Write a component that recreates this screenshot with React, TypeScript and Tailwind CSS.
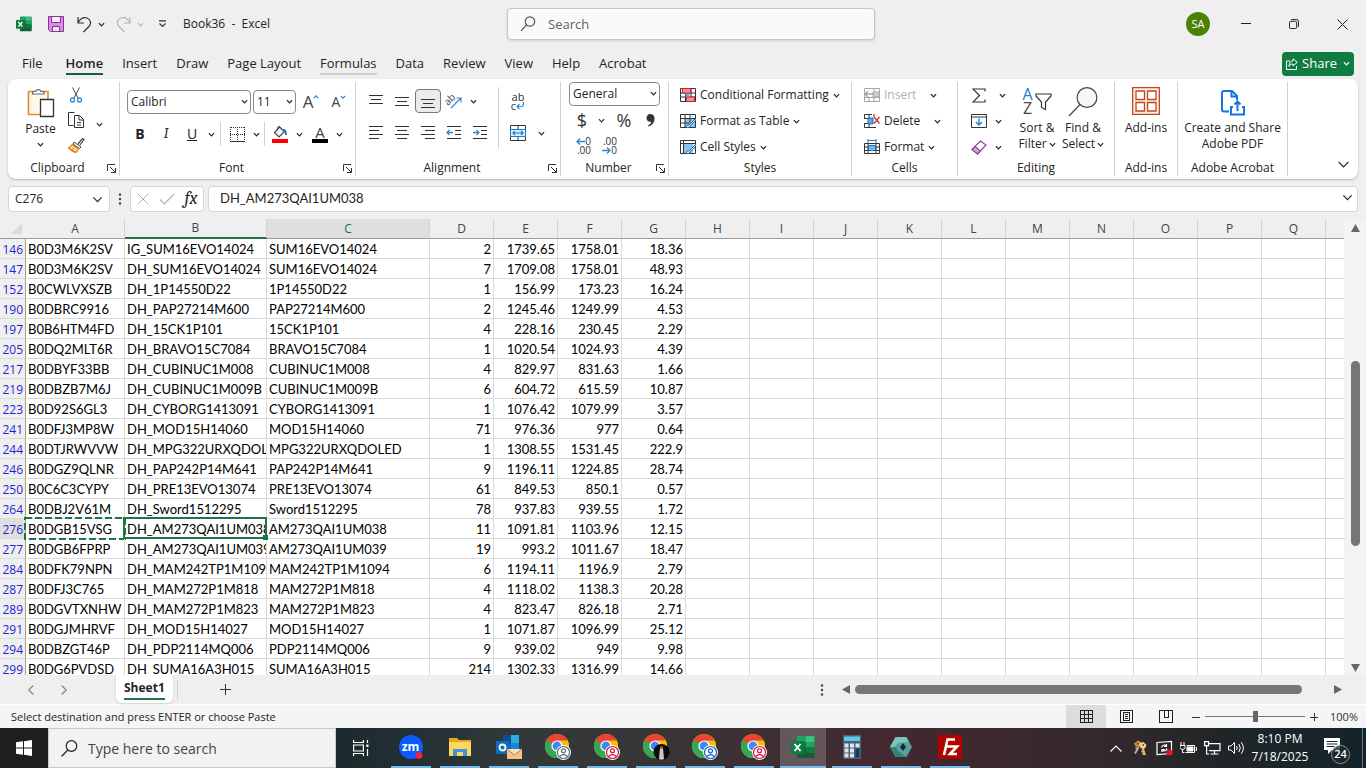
import { useState } from 'react';
import type { ReactNode } from 'react';
import clsx from 'clsx';

const TABS = ['File', 'Home', 'Insert', 'Draw', 'Page Layout', 'Formulas', 'Data', 'Review', 'View', 'Help', 'Acrobat'];

const COLUMNS = ['A', 'B', 'C', 'D', 'E', 'F', 'G', 'H', 'I', 'J', 'K', 'L', 'M', 'N', 'O', 'P', 'Q'];

const ROWS: [number, string, string, string, string, string, string, string][] = [
  [146, 'B0D3M6K2SV', 'IG_SUM16EVO14024', 'SUM16EVO14024', '2', '1739.65', '1758.01', '18.36'],
  [147, 'B0D3M6K2SV', 'DH_SUM16EVO14024', 'SUM16EVO14024', '7', '1709.08', '1758.01', '48.93'],
  [152, 'B0CWLVXSZB', 'DH_1P14550D22', '1P14550D22', '1', '156.99', '173.23', '16.24'],
  [190, 'B0DBRC9916', 'DH_PAP27214M600', 'PAP27214M600', '2', '1245.46', '1249.99', '4.53'],
  [197, 'B0B6HTM4FD', 'DH_15CK1P101', '15CK1P101', '4', '228.16', '230.45', '2.29'],
  [205, 'B0DQ2MLT6R', 'DH_BRAVO15C7084', 'BRAVO15C7084', '1', '1020.54', '1024.93', '4.39'],
  [217, 'B0DBYF33BB', 'DH_CUBINUC1M008', 'CUBINUC1M008', '4', '829.97', '831.63', '1.66'],
  [219, 'B0DBZB7M6J', 'DH_CUBINUC1M009B', 'CUBINUC1M009B', '6', '604.72', '615.59', '10.87'],
  [223, 'B0D92S6GL3', 'DH_CYBORG1413091', 'CYBORG1413091', '1', '1076.42', '1079.99', '3.57'],
  [241, 'B0DFJ3MP8W', 'DH_MOD15H14060', 'MOD15H14060', '71', '976.36', '977', '0.64'],
  [244, 'B0DTJRWVVW', 'DH_MPG322URXQDOLED', 'MPG322URXQDOLED', '1', '1308.55', '1531.45', '222.9'],
  [246, 'B0DGZ9QLNR', 'DH_PAP242P14M641', 'PAP242P14M641', '9', '1196.11', '1224.85', '28.74'],
  [250, 'B0C6C3CYPY', 'DH_PRE13EVO13074', 'PRE13EVO13074', '61', '849.53', '850.1', '0.57'],
  [264, 'B0DBJ2V61M', 'DH_Sword1512295', 'Sword1512295', '78', '937.83', '939.55', '1.72'],
  [276, 'B0DGB15VSG', 'DH_AM273QAI1UM038', 'AM273QAI1UM038', '11', '1091.81', '1103.96', '12.15'],
  [277, 'B0DGB6FPRP', 'DH_AM273QAI1UM039', 'AM273QAI1UM039', '19', '993.2', '1011.67', '18.47'],
  [284, 'B0DFK79NPN', 'DH_MAM242TP1M1094', 'MAM242TP1M1094', '6', '1194.11', '1196.9', '2.79'],
  [287, 'B0DFJ3C765', 'DH_MAM272P1M818', 'MAM272P1M818', '4', '1118.02', '1138.3', '20.28'],
  [289, 'B0DGVTXNHW', 'DH_MAM272P1M823', 'MAM272P1M823', '4', '823.47', '826.18', '2.71'],
  [291, 'B0DGJMHRVF', 'DH_MOD15H14027', 'MOD15H14027', '1', '1071.87', '1096.99', '25.12'],
  [294, 'B0DBZGT46P', 'DH_PDP2114MQ006', 'PDP2114MQ006', '9', '939.02', '949', '9.98'],
  [299, 'B0DG6PVDSD', 'DH_SUMA16A3H015', 'SUMA16A3H015', '214', '1302.33', '1316.99', '14.66'],
];

const Chevron = ({ size = 7, className }: { size?: number; className?: string }) => (
  <svg width={size} height={size} viewBox="0 0 8 8" fill="none" stroke="currentColor" strokeWidth="1.2" className={clsx('shrink-0', className)}>
    <path d="M1 2.4 4 5.5 7 2.4" vectorEffect="non-scaling-stroke" />
  </svg>
);

const Drop = ({ label, className }: { label: string; className?: string }) => (
  <button aria-label={label} className={clsx('flex h-6 w-3 items-center justify-center', className)}>
    <Chevron />
  </button>
);

const Tool = ({ label, children, className }: { label: string; children: ReactNode; className?: string }) => (
  <button aria-label={label} className={clsx('flex h-6 w-[26px] shrink-0 items-center justify-center', className)}>
    {children}
  </button>
);

const Divider = ({ className }: { className?: string }) => <span className={clsx('w-px bg-[#d1d1d1]', className)} />;

const Group = ({ name, launcher, className, inset, children }: { name: string; launcher?: boolean; className: string; inset?: string; children: ReactNode }) => (
  <section className={clsx('my-[3px] flex shrink-0 flex-col border-r border-[#d1d1d1]', className)}>
    <div className={clsx('h-[78px]', inset)}>{children}</div>
    <div className="flex h-4 items-center">
      <span className="flex-1 text-center whitespace-nowrap">{name}</span>
      {launcher && (
        <button aria-label={`${name} settings`} className="mr-[3px]">
          <svg width="9" height="9" viewBox="0 0 9 9" fill="none" stroke="#333">
            <path d="M.5 7V.5H8M3 3l5 5M8.5 4v4.5H4" />
          </svg>
        </button>
      )}
    </div>
  </section>
);

const Dropdown = ({ label, value, className }: { label: string; value: string; className: string }) => (
  <div className={clsx('relative', className)}>
    <select aria-label={label} className="h-6 w-full appearance-none rounded border border-[#8a8a8a] bg-white pl-[3px] text-xs">
      <option>{value}</option>
    </select>
    <Chevron className="pointer-events-none absolute top-2 right-[3px]" />
  </div>
);

const Lines = ({ rows }: { rows: [number, number, number][] }) => (
  <svg width="16" height="16" viewBox="0 0 16 16" stroke="#333" shapeRendering="crispEdges">
    {rows.map(([x1, x2, y]) => <path key={y} d={`M${x1} ${y}.5H${x2}`} />)}
  </svg>
);

type SheetKind = 'cond' | 'table' | 'cell' | 'insert' | 'delete' | 'format';

const SheetGlyph = ({ kind }: { kind: SheetKind }) => {
  const line = kind === 'insert' ? '#a6a6a6' : '#333';
  return (
    <svg width="16" height="16" viewBox="0 0 16 16" fill="none" stroke={line} className="shrink-0">
      {kind === 'cond' && (
        <>
          <path d="M.5 1.5h15v13H.5zM.5 6h15M.5 10h15M5.5 1v14M11 1v14" fill="#fff" />
          <path d="M2.5 1.5h8V6h-8zM6.5 10h8v4.5h-8z" fill="#ff8a8a" stroke="#c9252d" />
          <path d="M5.5 6.5h4v3h-4z" fill="#5ea5e0" stroke="none" />
        </>
      )}
      {kind === 'table' && (
        <>
          <path d="M5 5h10v10H5z" fill="#8cc3ef" stroke="none" />
          <path d="M.5 1.5h15v13H.5zM.5 5.5h15M.5 10h10M5 1v14M10 1v8" />
        </>
      )}
      {kind === 'cell' && (
        <>
          <path d="M4 5h9v9H4z" fill="#8cc3ef" stroke="none" />
          <path d="M.5 1.5h15v13H.5zM.5 4.5h15M3.5 1v14" />
        </>
      )}
      {(kind === 'table' || kind === 'cell') && (
        <path d="M15.5 5.5 9 12c-1.5-.5-2.5.5-3 2.5 2 .3 3.800 0 4.200-1.500L16 7z" fill="#d6ebfa" stroke="#1f6cb0" />
      )}
      {kind === 'insert' && (
        <>
          <path d="M.5 1.5h15v13H.5zM10 1v14M.5 10.5h15M5 10v5" />
          <path d="M9 5h6v5H9z" fill="#cfcfcf" />
          <path d="M10 7H1M4 4 1 7l3 3" strokeWidth="1.5" />
        </>
      )}
      {kind === 'delete' && (
        <>
          <path d="M8 1.500H.5V5M.5 10v4.500H12M5 1v4M5 10v4.500M10 1v3M0 5.500h4M0 10.500h4" />
          <path d="M4 5h5v6H4z" fill="#5ea9e6" stroke="#1f6cb0" />
          <path d="m10 4 5.500 6.500M15.500 4 10 10.500" stroke="#d13438" strokeWidth="1.3" />
        </>
      )}
      {kind === 'format' && (
        <>
          <path d="M4 0v4M12 0v4M4 1.500h8" stroke="#1f7cc9" />
          <path d="M.5 4.500h15v10H.5zM.5 8h15M.5 11.500h15M4 4v11M12 4v11" />
          <path d="M4.500 6.500h7v5h-7z" fill="#74b8f0" stroke="#1f6cb0" />
        </>
      )}
    </svg>
  );
};

const ListTool = ({ kind, text, disabled, wide }: { kind: SheetKind; text: string; disabled?: boolean; wide?: boolean }) => (
  <button className="flex h-[26px] items-center gap-1 whitespace-nowrap">
    <SheetGlyph kind={kind} />
    <span className={clsx(disabled && 'text-[#b0b0b0]')}>{text}</span>
    <Chevron className={clsx(wide && 'ml-2.5')} />
  </button>
);

const ExcelLogo = ({ size }: { size: number }) => (
  <svg width={size} height={size} viewBox="0 0 24 24">
    <path d="M7 1h15.500q1 0 1 1v20q0 1-1 1H7q-1 0-1-1V2q0-1 1-1" fill="#185c37" />
    <path d="M6 1h9v6H6zM15 7h8.500v5.500H15z" fill="#21a366" />
    <path d="M15 1h7.500q1 0 1 1v5H15z" fill="#33c481" />
    <path d="M6 7h9v5.500H6z" fill="#107c41" />
    <path d="M15 12.500h8.500V18H15z" fill="#107c41" />
    <rect y="6" width="13" height="13" rx="1" fill="#107c41" />
    <path d="m3.500 9 6 7M9.500 9l-6 7" stroke="#fff" strokeWidth="1.900" />
  </svg>
);

const TitleBar = () => (
  <header className="grid h-12 grid-cols-[507px_minmax(0,368px)_1fr] items-center">
    <div className="flex items-center pl-4">
      <ExcelLogo size={16} />
      <button aria-label="Save" className="ml-4">
        <svg width="16" height="16" viewBox="0 0 16 16" fill="#d98fe0" stroke="#8b2f97">
          <path d="M.5.5h15v15H2.500l-2-2z" />
          <path d="M3.500.5h9v6h-9zM4.500 10.500h7v5h-7z" fill="#f7ecf8" />
        </svg>
      </button>
      <button aria-label="Undo" className="ml-3">
        <svg width="17" height="17" viewBox="0 0 17 17" fill="none" stroke="#333" strokeWidth="1.200">
          <path d="M2 1v6h6M2 7c2.500-5 6-6 9-5 4 1.500 4.500 6 2 8.500L7.500 16" />
        </svg>
      </button>
      <Drop label="Undo history" className="ml-0.5" />
      <button aria-label="Redo" className="ml-2 text-[#b5b5b5]">
        <svg width="17" height="17" viewBox="0 0 17 17" fill="none" stroke="currentColor" strokeWidth="1.200">
          <path d="M15 1v6H9M15 7c-2.500-5-6-6-9-5-4 1.500-4.500 6-2 8.500L9.500 16" />
        </svg>
      </button>
      <Drop label="Redo history" className="ml-0.5 text-[#b5b5b5]" />
      <button aria-label="Customize toolbar" className="ml-3">
        <svg width="9" height="8" viewBox="0 0 9 8" fill="none" stroke="#333" strokeWidth="1.200">
          <path d="M1 .9h7M1.500 3.500l3 3 3-3" />
        </svg>
      </button>
      <span className="ml-4 text-xs whitespace-pre">Book36  -  Excel</span>
    </div>
    <label className="flex h-8 items-center gap-3 rounded border border-[#c4c4c4] bg-[#fafafa] pl-3 shadow-sm">
      <svg width="16" height="16" viewBox="0 0 16 16" fill="none" stroke="#555" strokeWidth="1.200">
        <circle cx="10" cy="5.500" r="4.700" />
        <path d="M6.500 9 1 14.800" />
      </svg>
      <input aria-label="Search" placeholder="Search" className="min-w-0 flex-1 bg-transparent pt-0.5 text-[13px] outline-none placeholder:text-[#616161]" />
    </label>
    <div className="flex h-full items-center justify-end">
      <button className="mr-3 flex size-6 items-center justify-center rounded-full bg-[#498205] text-[11px] text-white">SA</button>
      <button aria-label="Minimize" className="flex w-12 justify-center">
        <svg width="10" height="10" viewBox="0 0 10 10" stroke="#222"><path d="M0 4.500h10" /></svg>
      </button>
      <button aria-label="Restore" className="flex w-12 justify-center">
        <svg width="10" height="10" viewBox="0 0 11 11" fill="none" stroke="#222" strokeWidth="1.100">
          <rect x=".5" y="2.500" width="8" height="8" rx="1.500" />
          <path d="M2.500.5H8q2.500 0 2.500 2.500v5.500" />
        </svg>
      </button>
      <button aria-label="Close" className="flex w-12 justify-center">
        <svg width="11" height="11" viewBox="0 0 11 11" stroke="#222"><path d="m.5.5 10 10M10.500.5l-10 10" /></svg>
      </button>
    </div>
  </header>
);

const TabStrip = () => (
  <nav className="flex h-[31px] items-center pr-3 pl-3">
    {TABS.map((tab) => (
      <button key={tab} className={clsx('pr-[9px] pl-2.5 text-[13px] whitespace-nowrap', tab === 'File' && 'mr-1')}>
        <span
          className={clsx(
            'block border-b-2 leading-5',
            tab === 'Home' ? 'border-[#185c37] font-semibold' : tab === 'Formulas' ? 'border-[#cfcfcf]' : 'border-transparent'
          )}
        >
          {tab}
        </span>
      </button>
    ))}
    <button className="ml-auto flex h-6 items-center gap-1 rounded bg-[#107c41] px-1 text-[13px] text-white">
      <svg width="12" height="12" viewBox="0 0 12 12" fill="none" stroke="#fff">
        <path d="M4 3H.5v8.500h10V8" />
        <path d="M7 .8 11.300 4.300 7 7.800V6C5 6 3.500 7 3 8.500 3 5 4.500 3 7 2.800z" />
      </svg>
      Share
      <Chevron className="ml-0.5" />
    </button>
  </nav>
);

const Ribbon = () => (
  <div className="mx-2 flex rounded-lg bg-white text-xs shadow-[0_1px_2px_rgba(0,0,0,0.25)]">
    <Group name="Clipboard" launcher className="w-[112px]">
      <div className="flex pt-[5px] pl-[5px]">
        <button className="flex w-[55px] flex-col items-center">
          <svg width="28" height="32" viewBox="0 0 28 32" fill="none">
            <path d="M1.500 4.500H21V12M1.500 4v23.500H13" stroke="#e58a1f" strokeWidth="1.600" />
            <path d="M3 6h16v20H3z" fill="#fff8ee" />
            <path d="M5.500 7V4.500h3a3 3 0 0 1 5.500 0h3V7z" fill="#fff" stroke="#666" strokeWidth="1.200" />
            <path d="M13.500 12.500h13v17h-13z" fill="#fff" stroke="#333" strokeWidth="1.300" />
          </svg>
          <span className="leading-5">Paste</span>
          <Chevron className="mt-0.5" />
        </button>
        <div className="flex flex-col">
          <button aria-label="Cut" className="flex h-[25px] items-start pl-0.5">
            <svg width="12" height="16" viewBox="0 0 12 16" fill="none">
              <path d="M2.500.5 8 11M9.500.5 4 11" stroke="#444" />
              <circle cx="2.500" cy="13" r="2" stroke="#2b88d8" strokeWidth="1.300" />
              <circle cx="9.500" cy="13" r="2" stroke="#2b88d8" strokeWidth="1.300" />
            </svg>
          </button>
          <div className="flex h-[25px] items-start">
            <button aria-label="Copy">
              <svg width="17" height="16" viewBox="0 0 17 16" fill="#fff" stroke="#333">
                <path d="M5.500 13.500H.5V.5h6" />
                <path d="M6.500 3.500h5l4 4v8h-9z" />
                <path d="M11 3.500V8h4.500M9 10.500h4M9 13h4" fill="none" />
              </svg>
            </button>
            <Drop label="Copy options" className="ml-2 h-4" />
          </div>
          <button aria-label="Format Painter">
            <svg width="17" height="16" viewBox="0 0 17 16" fill="none">
              <path d="m10 7 4.500-5.500 1.500 1L12 8" stroke="#444" strokeWidth="1.200" />
              <path d="m6 5 7 5-1.500 1.500L5 7z" fill="#fff" stroke="#444" />
              <path d="m4 7.500 6.500 4.500L8 15.300q-4-.5-7.500-4.500 2-.8 3.500-3.300" fill="#fbdcb1" stroke="#e0801a" strokeWidth="1.400" />
              <path d="m4 13 2-2.500" stroke="#e0801a" />
            </svg>
          </button>
        </div>
      </div>
    </Group>

    <Group name="Font" launcher className="w-[236px]" inset="pl-[7px]">
      <div className="flex items-center gap-0.5 pt-2">
        <Dropdown label="Font" value="Calibri" className="w-[124px]" />
        <Dropdown label="Font size" value="11" className="w-[43px]" />
        <Tool label="Increase font size" className="items-start text-[17px] leading-6 text-[#444]">
          A<Chevron size={6} className="mt-1 rotate-180 text-[#2b88d8]" />
        </Tool>
        <Tool label="Decrease font size" className="items-start text-sm leading-6 text-[#444]">
          A<Chevron size={6} className="mt-1 text-[#2b88d8]" />
        </Tool>
      </div>
      <div className="mt-2 flex items-center text-sm">
        <Tool label="Bold" className="font-bold">B</Tool>
        <Tool label="Italic" className="font-serif italic">I</Tool>
        <Tool label="Underline" className="w-6 underline">U</Tool>
        <Drop label="Underline options" />
        <Divider className="mx-[3px] h-6" />
        <Tool label="Borders" className="w-6">
          <svg width="15" height="15" viewBox="0 0 15 15" fill="none" stroke="#333" shapeRendering="crispEdges">
            <path d="M.5 0v13M.5.500H15M14.500 0v13M7.500 0v13M0 7.500h15" strokeDasharray="1 1" />
            <path d="M0 14.500h15" />
          </svg>
        </Tool>
        <Drop label="Border options" />
        <Divider className="mx-0.5 h-6" />
        <Tool label="Fill color">
          <svg width="16" height="18" viewBox="0 0 16 18" fill="none">
            <path d="m7.500 2 5 4.500-5.500 5.500-4.500-4.500z" fill="#eef6fd" stroke="#444" strokeWidth="1.200" />
            <path d="M5.500 5V2.500q1.500-2.500 3 0" stroke="#444" />
            <path d="M11 5q3 0 3 5" stroke="#1f6cb0" strokeWidth="1.800" />
            <path d="M0 14h16v4H0z" fill="#f00" />
          </svg>
        </Tool>
        <Drop label="Fill colors" />
        <Tool label="Font color" className="ml-0.5 flex-col text-[15px] leading-[14px] text-[#444]">
          A
          <span className="h-1 w-4 bg-black" />
        </Tool>
        <Drop label="Font colors" />
      </div>
    </Group>

    <Group name="Alignment" launcher className="w-[205px]" inset="pl-[7px]">
      <div className="flex">
        <div className="mt-[5px] w-[136px] border-r border-[#d1d1d1] pt-0.5 pb-1">
          <div className="flex items-center">
            <Tool label="Top align"><Lines rows={[[1, 15, 2], [3, 13, 6], [1, 15, 10]]} /></Tool>
            <Tool label="Middle align"><Lines rows={[[1, 15, 4], [3, 13, 8], [1, 15, 12]]} /></Tool>
            <Tool label="Bottom align" className="rounded border border-[#777] bg-[#ebebeb]"><Lines rows={[[1, 15, 6], [3, 13, 10], [1, 15, 14]]} /></Tool>
            <Tool label="Orientation">
              <svg width="18" height="18" viewBox="0 0 18 18" fill="none" className="overflow-visible">
                <text x="0" y="11" fontSize="10" fill="#444" transform="rotate(-45 5 9)">ab</text>
                <path d="M6 16 16 6M11.500 6H16v4.500" stroke="#2b88d8" strokeWidth="1.200" />
              </svg>
            </Tool>
            <Drop label="Orientation options" className="w-2" />
          </div>
          <div className="mt-2 flex items-center">
            <Tool label="Align left"><Lines rows={[[1, 15, 1], [1, 11, 5], [1, 15, 9], [1, 11, 13]]} /></Tool>
            <Tool label="Center"><Lines rows={[[1, 15, 1], [3, 13, 5], [1, 15, 9], [3, 13, 13]]} /></Tool>
            <Tool label="Align right"><Lines rows={[[1, 15, 1], [5, 15, 5], [1, 15, 9], [5, 15, 13]]} /></Tool>
            <Tool label="Decrease indent">
              <svg width="16" height="16" viewBox="0 0 16 16" fill="none" stroke="#333">
                <path d="M1 1.500h14M9 5.500h6M9 9.500h6M1 13.500h14" />
                <path d="M7 7.500H1M3.500 5 1 7.500 3.500 10" stroke="#2b88d8" strokeWidth="1.300" />
              </svg>
            </Tool>
            <Tool label="Increase indent">
              <svg width="16" height="16" viewBox="0 0 16 16" fill="none" stroke="#333">
                <path d="M1 1.500h14M9 5.500h6M9 9.500h6M1 13.500h14" />
                <path d="M1 7.500h6M4.500 5 7 7.500 4.500 10" stroke="#2b88d8" strokeWidth="1.300" />
              </svg>
            </Tool>
          </div>
        </div>
        <div className="pt-[7px] pl-1.5">
          <Tool label="Wrap text" className="flex-col text-[11px] leading-[9px] text-[#333]">
            <span>ab</span>
            <span className="flex">
              c
              <svg width="9" height="9" viewBox="0 0 9 9" fill="none" stroke="#2b88d8" strokeWidth="1.200">
                <path d="M7.500 1v2q0 2.500-2.500 2.500H1M3.500 3 1 5.500 3.500 8" />
              </svg>
            </span>
          </Tool>
          <div className="mt-2 flex items-center">
            <Tool label="Merge and center" className="w-6">
              <svg width="16" height="16" viewBox="0 0 16 16" fill="none" stroke="#333">
                <path d="M.5.5h15v15H.5zM8 0v4M8 12v4" />
                <path d="M.5 4.500h15v7H.5z" fill="#d9edfb" stroke="#1f7cc9" />
                <path d="M3 8h10M5 6 3 8l2 2M11 6l2 2-2 2" stroke="#1f7cc9" strokeWidth="1.200" />
              </svg>
            </Tool>
            <Drop label="Merge options" className="ml-1" />
          </div>
        </div>
      </div>
    </Group>

    <Group name="Number" launcher className="w-[108px]" inset="pl-2">
      <Dropdown label="Number format" value="General" className="w-[91px]" />
      <div className="flex items-center pt-0.5 text-lg text-[#333]">
        <Tool label="Accounting format" className="w-6">$</Tool>
        <Drop label="Accounting options" />
        <Tool label="Percent style" className="ml-1">%</Tool>
        <Tool label="Comma style">
          <svg width="9" height="13" viewBox="0 0 9 13" fill="#333">
            <path d="M4 0c3 0 4.500 2 4.500 4.500 0 4-2.500 7-6 8l-.5-1c2-1 3-2.200 3-3.800C2.500 8.200.5 6.500.5 4 .5 1.800 2 0 4 0" />
          </svg>
        </Tool>
      </div>
      <div className="flex items-center pt-0.5 text-[10px] leading-[9px] text-[#333]">
        <Tool label="Increase decimal" className="flex-col items-end pr-1">
          <span className="flex"><svg width="9" height="9" viewBox="0 0 9 8" fill="none" stroke="#2b88d8" strokeWidth="1.300"><path d="M9 4H1M4 1 1 4l3 3" /></svg>0</span>
          <span>.00</span>
        </Tool>
        <Tool label="Decrease decimal" className="flex-col items-end pr-1">
          <span>.00</span>
          <span className="flex"><svg width="9" height="9" viewBox="0 0 9 8" fill="none" stroke="#2b88d8" strokeWidth="1.300"><path d="M0 4h8M5 1l3 3-3 3" /></svg>0</span>
        </Tool>
      </div>
    </Group>

    <Group name="Styles" className="w-[183px]" inset="pl-[11px]">
      <ListTool kind="cond" text="Conditional Formatting" />
      <ListTool kind="table" text="Format as Table" />
      <ListTool kind="cell" text="Cell Styles" />
    </Group>

    <Group name="Cells" className="w-[106px]" inset="pl-3">
      <ListTool kind="insert" text="Insert" disabled wide />
      <ListTool kind="delete" text="Delete" wide />
      <ListTool kind="format" text="Format" />
    </Group>

    <Group name="Editing" className="w-[157px]" inset="pl-2">
      <div className="flex">
        <div className="w-12">
          <div className="flex h-[26px] items-center">
            <Tool label="AutoSum">
              <svg width="14" height="15" viewBox="0 0 14 15" fill="none" stroke="#333" strokeWidth="1.200">
                <path d="M13 3.500V1H1l6.500 6.500L1 14h12v-2.500" />
              </svg>
            </Tool>
            <Drop label="AutoSum options" className="ml-1" />
          </div>
          <div className="flex h-[26px] items-center">
            <Tool label="Fill">
              <svg width="16" height="14" viewBox="0 0 16 14" fill="none" stroke="#333">
                <path d="M.5.5h15v13H.5zM.5 3h15" />
                <path d="M8 4.500V11M5 8l3 3 3-3" stroke="#1f7cc9" strokeWidth="1.300" />
              </svg>
            </Tool>
            <Drop label="Fill options" className="w-2" />
          </div>
          <div className="flex h-[26px] items-center">
            <Tool label="Clear">
              <svg width="16" height="15" viewBox="0 0 16 15" fill="#fff" stroke="#8b3f97" strokeWidth="1.100">
                <path d="M9.500 1 15 5l-8.500 9L1 9.500z" />
                <path d="M4 6.500 9.500 11l-3 3L1 9.500z" fill="#d9a5df" />
              </svg>
            </Tool>
            <Drop label="Clear options" className="w-2" />
          </div>
        </div>
        <button className="mt-[5px] flex w-[46px] flex-col items-center">
          <span className="flex h-[30px] text-[#444]">
            <span className="flex flex-col text-base leading-[14px]">
              <span className="text-[#1f7cc9]">A</span>
              <span>Z</span>
            </span>
            <svg width="17" height="18" viewBox="0 0 17 18" fill="none" stroke="#333" strokeWidth="1.200" className="mt-1.5 ml-0.5">
              <path d="M1 1h15v2L10.500 9v7.500l-4-2V9L1 3z" />
            </svg>
          </span>
          <span className="mt-[3px] leading-4 whitespace-nowrap">Sort &</span>
          <span className="flex items-center gap-0.5 leading-4">Filter <Chevron /></span>
        </button>
        <button className="mt-[5px] flex w-[46px] flex-col items-center">
          <svg width="30" height="30" viewBox="0 0 30 30" fill="#f7f7f7" stroke="#444" strokeWidth="1.200">
            <circle cx="19" cy="10.500" r="9.900" />
            <path d="M12 17.500 1 29" />
          </svg>
          <span className="mt-[3px] leading-4 whitespace-nowrap">Find &</span>
          <span className="flex items-center gap-0.5 leading-4">Select <Chevron /></span>
        </button>
      </div>
    </Group>

    <Group name="Add-ins" className="w-[63px]">
      <button className="flex w-full flex-col items-center pt-[5px]">
        <svg width="28" height="28" viewBox="0 0 28 28" fill="none" stroke="#c2451e" strokeWidth="1.300">
          <path d="M.7.7h26.600v26.600H.7z" fill="#fdf0ea" />
          <path d="M4 4h8.500v8.500H4zM15.500 4H24v8.500h-8.500zM4 15.500h8.500V24H4zM15.500 15.500H24V24h-8.500z" fill="#fff" />
        </svg>
        <span className="mt-[5px] leading-4">Add-ins</span>
      </button>
    </Group>

    <Group name="Adobe Acrobat" className="w-[110px]">
      <button className="flex w-full flex-col items-center pt-2">
        <svg width="24" height="26" viewBox="0 0 24 26" fill="none" stroke="#1473e6" strokeWidth="2">
          <path d="M8 21.500H3q-2 0-2-2V3q0-2 2-2h8l5 5v4M10.500 1v5.500H16" />
          <path d="M12 17h-2v7.500h13V17h-2M16.500 21v-9M13.500 14.500l3-3 3 3" />
        </svg>
        <span className="mt-1 leading-4 whitespace-nowrap">Create and Share</span>
        <span className="leading-4 whitespace-nowrap">Adobe PDF</span>
      </button>
    </Group>

    <button aria-label="Collapse ribbon" className="mr-2 mb-2 ml-auto self-end">
      <Chevron size={13} />
    </button>
  </div>
);

const FormulaBar = () => (
  <div className="flex h-10 items-center px-2">
    <label className="flex h-[26px] w-[102px] items-center rounded border border-[#d6d6d6] bg-white px-1.5">
      <input aria-label="Name box" defaultValue="C276" className="min-w-0 flex-1 text-xs outline-none" />
      <Chevron size={11} />
    </label>
    <svg width="4" height="14" viewBox="0 0 4 14" fill="#444" className="mx-2">
      <circle cx="2" cy="2.500" r="1.200" /><circle cx="2" cy="7" r="1.200" /><circle cx="2" cy="11.500" r="1.200" />
    </svg>
    <div className="flex h-[26px] w-[74px] items-center rounded border border-[#d6d6d6] bg-white">
      <button aria-label="Cancel" className="flex w-6 justify-center">
        <svg width="12" height="12" viewBox="0 0 12 12" stroke="#b5b5b5"><path d="m.5.5 11 11M11.500.5l-11 11" /></svg>
      </button>
      <button aria-label="Enter" className="flex w-6 justify-center">
        <svg width="16" height="12" viewBox="0 0 16 12" fill="none" stroke="#b5b5b5" strokeWidth="1.200"><path d="m1 6.500 4.500 4.500L15 1" /></svg>
      </button>
      <button aria-label="Insert function" className="flex-1 font-serif text-lg leading-5 italic">fx</button>
    </div>
    <label className="ml-1 flex h-[26px] flex-1 items-center rounded border border-[#d6d6d6] bg-white pr-1 pl-[11px]">
      <input aria-label="Formula" defaultValue="DH_AM273QAI1UM038" className="min-w-0 flex-1 font-['Lato',sans-serif] text-[13px] outline-none" />
      <Chevron size={11} className="mb-1" />
    </label>
  </div>
);

const Grid = () => (
  <div className="flex min-h-0 flex-1">
    <div className="min-w-0 flex-1 overflow-hidden bg-white">
      <table className="w-full table-fixed border-separate border-spacing-0 font-['Lato',sans-serif] text-[13px] leading-[17px]">
        <colgroup>
          <col className="w-[26px]" />
          <col className="w-[99px]" />
          <col className="w-[142px]" />
          <col className="w-[163px]" />
          {COLUMNS.slice(3).map((c) => <col key={c} className="w-16" />)}
          <col />
        </colgroup>
        <thead>
          <tr className="h-5 bg-[#efefef] font-['Open_Sans',sans-serif] text-xs text-[#444]">
            <th className="border-b border-[#9b9b9b] p-0">
              <svg width="11" height="11" viewBox="0 0 11 11" fill="#dcdcdc" className="mr-1 ml-auto"><path d="M11 0v11H0z" /></svg>
            </th>
            {COLUMNS.map((c) => (
              <th
                key={c}
                className={clsx(
                  'border-r border-r-[#d4d4d4] p-0 font-normal',
                  c === 'B' ? 'border-b-2 border-b-[#217346]' : 'border-b border-b-[#9b9b9b]',
                  c === 'C' && 'bg-[#dfdfdf] text-[#217346]'
                )}
              >
                <span className="block leading-[18px]">{c}</span>
              </th>
            ))}
            <th className="border-b border-[#9b9b9b]" />
          </tr>
        </thead>
        <tbody>
          {ROWS.map(([num, ...cells]) => (
            <tr key={num} className="h-5">
              <th
                className={clsx(
                  "border-r border-b border-r-[#a3a38c] border-b-[#dadada] p-0 pt-0.5 pr-0.5 text-right font-['Open_Sans',sans-serif] text-xs leading-[17px] font-normal text-[#1f1fd6]",
                  num === 276 ? 'bg-[#dfdfdf]' : 'bg-[#efefef]'
                )}
              >
                {num}
              </th>
              {COLUMNS.map((c, i) => (
                <td key={c} className={clsx('relative border-r border-b border-[#dadada] p-0', i > 2 && 'text-right')}>
                  <div className="overflow-hidden px-0.5 pt-0.5 whitespace-nowrap text-black">{cells[i]}</div>
                  {num === 276 && c === 'A' && (
                    <svg className="absolute -top-px -left-px h-[21px] w-[calc(100%+2px)] overflow-visible">
                      <rect width="100%" height="100%" fill="none" stroke="#217346" strokeWidth="2" strokeDasharray="7 3" />
                    </svg>
                  )}
                  {num === 276 && c === 'B' && (
                    <div className="absolute -top-0.5 -right-px -bottom-px -left-0.5 z-10 border-2 border-[#217346]">
                      <span className="absolute -right-[3px] -bottom-[3px] size-[5px] bg-[#217346]" />
                    </div>
                  )}
                </td>
              ))}
              <td className="border-b border-[#dadada]" />
            </tr>
          ))}
        </tbody>
      </table>
    </div>
    <div className="flex w-[22px] flex-col items-center bg-[#f3f3f3] pt-[5px] pb-[3px]">
      <svg width="9" height="8" viewBox="0 0 9 8" fill="#666"><path d="M4.500 0 9 8H0z" /></svg>
      <div className="flex-[129]" />
      <div className="w-[9px] flex-[185] rounded-full bg-[#767676]" />
      <div className="flex-[118]" />
      <svg width="9" height="8" viewBox="0 0 9 8" fill="#666"><path d="M4.500 8 9 0H0z" /></svg>
    </div>
  </div>
);

const SheetBar = () => (
  <div className="flex h-[30px] items-center border-b border-white">
    <button aria-label="Previous sheet" className="ml-[25px] flex w-3 justify-center text-[#888]"><Chevron size={12} className="rotate-90" /></button>
    <button aria-label="Next sheet" className="ml-[21px] flex w-3 justify-center text-[#888]"><Chevron size={12} className="-rotate-90" /></button>
    <button className="ml-[46px] h-[28px] self-start rounded-b-md bg-white px-2 text-xs font-bold shadow-sm">
      <span className="block border-b-2 border-[#217346] leading-5">Sheet1</span>
    </button>
    <Divider className="ml-1 h-5" />
    <button aria-label="New sheet" className="ml-[42px]">
      <svg width="11" height="11" viewBox="0 0 11 11" stroke="#333"><path d="M5.500 0v11M0 5.500h11" /></svg>
    </button>
    <div className="ml-auto flex w-[546px] items-center">
      <svg width="4" height="14" viewBox="0 0 4 14" fill="#444">
        <circle cx="2" cy="2.500" r="1.200" /><circle cx="2" cy="7" r="1.200" /><circle cx="2" cy="11.500" r="1.200" />
      </svg>
      <svg width="8" height="9" viewBox="0 0 8 9" fill="#666" className="ml-[18px]"><path d="M8 0v9L0 4.500z" /></svg>
      <div className="ml-[5px] h-[9px] flex-1 rounded-full bg-[#767676]" />
      <svg width="8" height="9" viewBox="0 0 8 9" fill="#666" className="mr-6 ml-8"><path d="M0 0v9l8-4.500z" /></svg>
    </div>
  </div>
);

const StatusBar = () => {
  const [zoom, setZoom] = useState(50);
  return (
    <footer className="flex h-[23px] items-center bg-[#f5f5f5] pl-[11px] text-[11px]">
      <span className="pt-0.5">Select destination and press ENTER or choose Paste</span>
      <div className="ml-auto flex h-full items-center text-[#333]">
        <button aria-label="Normal view" className="flex h-full w-10 items-center justify-center bg-[#dcdcdc]">
          <svg width="13" height="13" viewBox="0 0 13 13" fill="none" stroke="#222" shapeRendering="crispEdges"><path d="M.5.5h12v12H.5zM4.500 0v13M8.500 0v13M0 4.500h13M0 8.500h13" /></svg>
        </button>
        <button aria-label="Page layout view" className="flex w-10 justify-center">
          <svg width="13" height="13" viewBox="0 0 13 13" fill="none" stroke="#222" shapeRendering="crispEdges"><path d="M.5.5h12v12H.5zM3.500 2.500h6v8h-6zM5 4.500h3M5 6.500h3M5 8.500h3" /></svg>
        </button>
        <button aria-label="Page break preview" className="flex w-10 justify-center">
          <svg width="14" height="13" viewBox="0 0 14 13" fill="none" stroke="#222" shapeRendering="crispEdges"><path d="M.5.500h13v12H.5zM5.500 0v7.500M9.500 0v7.500H5" /></svg>
        </button>
        <button aria-label="Zoom out" className="ml-[6px]"><svg width="8" height="8" viewBox="0 0 8 8" stroke="#333"><path d="M0 4.500h8" /></svg></button>
        <input
          aria-label="Zoom"
          type="range"
          value={zoom}
          onChange={(e) => setZoom(Number(e.target.value))}
          className="mx-[5px] h-3 w-[100px] appearance-none bg-[linear-gradient(#777,#777)] bg-[length:100%_1px] bg-center bg-no-repeat [&::-webkit-slider-thumb]:h-[11px] [&::-webkit-slider-thumb]:w-[5px] [&::-webkit-slider-thumb]:appearance-none [&::-webkit-slider-thumb]:bg-[#666]"
        />
        <button aria-label="Zoom in"><svg width="8" height="8" viewBox="0 0 8 8" stroke="#333"><path d="M0 4.500h8M4.500 0v8" /></svg></button>
        <button className="mr-2 ml-3 pt-0.5">100%</button>
      </div>
    </footer>
  );
};

const Chrome = ({ badge }: { badge: string }) => (
  <svg width="28" height="28" viewBox="0 0 28 28">
    <circle cx="13" cy="13" r="12" fill="#fbbc04" />
    <path d="M13 1A12 12 0 0 0 2.600 7L8 16l5-3h10.400V7A12 12 0 0 0 13 1" fill="#ea4335" />
    <path d="M2.600 7A12 12 0 0 0 13 25l5-9-5-3z" fill="#34a853" />
    <path d="M13 7.500h10.700A12 12 0 0 1 14 25l4-9z" fill="#fbbc04" />
    <circle cx="13" cy="13" r="5.600" fill="#fff" />
    <circle cx="13" cy="13" r="4.400" fill="#4285f4" />
    {badge === 'photo' ? (
      <g>
        <circle cx="19.500" cy="19" r="8" fill="#0c0c0e" />
        <path d="M18 15q2-2 3 0l1 11q-3 1.500-5 0z" fill="#cfc8c2" />
        <circle cx="19.500" cy="14.500" r="1.500" fill="#8a6450" />
      </g>
    ) : (
      <g fill="none" stroke={badge} strokeWidth="1.200">
        <circle cx="19.500" cy="19.500" r="7.500" fill="#fff" stroke="none" />
        <circle cx="19.500" cy="19.500" r="6" />
        <circle cx="19.500" cy="17.800" r="2" />
        <path d="M15.500 23.500q4-4 8 0" />
      </g>
    )}
  </svg>
);

const APPS: { name: string; active?: boolean; icon: ReactNode }[] = [
  {
    name: 'Zoom',
    icon: (
      <svg width="26" height="26" viewBox="0 0 26 26">
        <circle cx="13" cy="13" r="12" fill="#0b5cff" />
        <text x="12.500" y="17" textAnchor="middle" fontSize="12" fontWeight="700" fill="#fff">zm</text>
        <circle cx="21" cy="21.500" r="3.500" fill="#e8283a" />
      </svg>
    ),
  },
  {
    name: 'File Explorer',
    icon: (
      <svg width="24" height="24" viewBox="0 0 24 24">
        <path d="M1 3h8l2 2h12v5H1z" fill="#e8a922" />
        <path d="M1 7h22v14H1z" fill="#ffd75e" />
        <path d="M5 21v-7h14v7h-4v-4H9v4z" fill="#3a96dd" />
      </svg>
    ),
  },
  {
    name: 'Outlook',
    icon: (
      <svg width="26" height="26" viewBox="0 0 26 26">
        <path d="M7 1h16v17H7z" fill="#1066b5" />
        <path d="M7 1h8v8H7z" fill="#0a4f94" /><path d="M15 1h8v8h-8z" fill="#32a9e7" /><path d="M15 9h8v9h-8z" fill="#1484d6" />
        <rect y="7" width="13" height="13" rx="1" fill="#0f6cbd" />
        <circle cx="6.500" cy="13.500" r="3" fill="none" stroke="#fff" strokeWidth="1.800" />
        <path d="M11 15h15v10H11z" fill="#f3c388" /><path d="m11 15 7.500 6 7.500-6" fill="#fbe0bb" stroke="#b97f3c" />
      </svg>
    ),
  },
  { name: 'Chrome 1', icon: <Chrome badge="#5b7480" /> },
  { name: 'Chrome 2', icon: <Chrome badge="#d3183b" /> },
  { name: 'Chrome 3', icon: <Chrome badge="photo" /> },
  { name: 'Chrome 4', icon: <Chrome badge="#1f5fd0" /> },
  { name: 'Chrome 5', icon: <Chrome badge="#d3183b" /> },
  { name: 'Excel', active: true, icon: <ExcelLogo size={24} /> },
  {
    name: 'Calculator',
    icon: (
      <svg width="20" height="24" viewBox="0 0 20 24">
        <path d="M1 0h18v24H1z" fill="#4b6475" />
        <path d="M2 1.500h16V6H2z" fill="#5cc8ee" />
        <path d="M2.500 8.500h4v4h-4zM8 8.500h4v4H8zM13.500 8.500h4v4h-4zM2.500 13.500h4v4h-4zM8 13.500h4v4H8zM2.500 18.500h4v4h-4zM8 18.500h4v4H8z" fill="#dfe6ea" />
        <path d="M13.500 13.500h4v9h-4z" fill="#123a5e" />
      </svg>
    ),
  },
  {
    name: 'Hexnode',
    icon: (
      <svg width="24" height="24" viewBox="0 0 24 24">
        <path d="M6.500 2h11L23 12l-5.500 10h-11L1 12z" fill="#4fa59b" />
        <path d="M6.500 2h11L20 7 9 8l-3 4H1z" fill="#79c4b8" />
        <path d="m1 12 5.500 10H17l-8-6-2-4z" fill="#368278" />
        <path d="m14 8 3 4-3 4-3-4z" fill="#2b2230" />
      </svg>
    ),
  },
  {
    name: 'FileZilla',
    icon: (
      <svg width="24" height="24" viewBox="0 0 24 24">
        <rect width="24" height="24" rx="1" fill="#b30000" />
        <path d="M6 20 9.500 4.500H17M8 11.500h6M13 11.500h6L12 19h7" fill="none" stroke="#fff" strokeWidth="2.600" />
      </svg>
    ),
  },
];

const Taskbar = () => (
  <div className="flex h-10 bg-[linear-gradient(90deg,#1c2528_0%,#1b2a2e_25%,#32393a_38%,#3b3335_52%,#43282f_65%,#35292d_80%,#232628_88%,#13232b_100%)] text-white">
    <button aria-label="Start" className="flex w-12 items-center justify-center bg-[#1d1e20]">
      <svg width="16" height="16" viewBox="0 0 16 16" fill="#fff"><path d="M0 2.300 7 1.300v6.200H0zM8 1.200 16 0v7.500H8zM0 8.500h7v6.200l-7-1zM8 8.500h8V16l-8-1.200z" /></svg>
    </button>
    <label className="flex w-[288px] items-center gap-2.5 border border-[#c9c9c9] bg-[#f2f2f2] pl-3 text-[#333]">
      <svg width="17" height="17" viewBox="0 0 17 17" fill="none" stroke="#222" strokeWidth="1.200"><circle cx="10.500" cy="6" r="5.300" /><path d="M6.800 10 .5 16.500" /></svg>
      <input aria-label="Type here to search" placeholder="Type here to search" className="min-w-0 flex-1 bg-transparent pt-0.5 text-sm outline-none placeholder:text-[#444]" />
    </label>
    <button aria-label="Task view" className="mr-px flex w-[49px] items-center justify-center">
      <svg width="16" height="16" viewBox="0 0 16 16" fill="none" stroke="#fff" strokeWidth="1.200"><path d="M.6 0v2.500h9.800V0M.6 16v-2.500h9.800V16M.6 5h9.800v6H.6zM14.500 0v3M14.500 9v7" /><path d="M13.300 4.500h2.200v2.500h-2.200z" fill="#fff" stroke="none" /></svg>
    </button>
    {APPS.map((app) => (
      <button key={app.name} aria-label={app.name} className="flex w-[49px] justify-center">
        <span className={clsx('flex h-full flex-col items-center justify-between', app.active ? 'w-[46px] bg-white/20' : 'w-10')}>
          <span className="flex flex-1 items-center">{app.icon}</span>
          <span className="h-0.5 w-full bg-[#76b9ed]" />
        </span>
      </button>
    ))}
    <div className="ml-auto flex items-center">
      <button aria-label="Show hidden icons" className="w-6">
        <svg width="12" height="7" viewBox="0 0 12 7" fill="none" stroke="#fff" strokeWidth="1.200" className="mx-auto"><path d="m.5 6.500 5.500-5.500 5.500 5.500" /></svg>
      </button>
      <button aria-label="Keys" className="flex w-6 justify-center">
        <svg width="14" height="16" viewBox="0 0 14 16" fill="none">
          <path d="M6 6.500 2 13.500M4.500 9 2.500 8" stroke="#b9b2a5" strokeWidth="1.800" />
          <path d="M9.500 7.500 12 15M10.800 11l-2.300.8M11.600 13.500l-2 .7" stroke="#e6b765" strokeWidth="2" />
          <path d="M1 3.500 5 .5l4 2L8 6 3 7z" fill="#d98a2b" />
          <path d="m6 3.500 4.500-1.500L13.500 5 12 8.500 7.500 8z" fill="#f0cf8e" />
          <path d="M4 3h1.500v1.500H4zM9.500 4.300H11v1.500H9.500z" fill="#4b2c14" />
        </svg>
      </button>
      <button aria-label="Updates" className="flex w-6 justify-center">
        <svg width="17" height="16" viewBox="0 0 17 16" fill="none" stroke="#fff" strokeWidth="1.200">
          <path d="m1 2.500 14.500-1v12L1 14.500z" /><path d="M5.500 7.500a3 3 0 0 1 5-1.500M10.500 4v2.500H8M11 8.500a3 3 0 0 1-5 1.500M6 12V9.500h2.500" />
          <circle cx="13.500" cy="12.500" r="3" fill="#e81123" stroke="none" />
        </svg>
      </button>
      <button aria-label="Battery" className="flex w-6 justify-center">
        <svg width="17" height="12" viewBox="0 0 17 12" fill="none" stroke="#fff"><path d="M1 0v3M4 0v3M0 3.500h5v2q-.5 2-2.500 2-2 0-2.500-2zM2.500 7.500v3h2M6.500 3.500h8v7h-9M15.500 5.500h1v3h-1" /><path d="M7 5h6v4H7z" fill="#fff" /></svg>
      </button>
      <button aria-label="Network" className="flex w-6 justify-center">
        <svg width="17" height="14" viewBox="0 0 17 14" fill="none" stroke="#fff" strokeWidth="1.200"><path d="M5 2.600h11v7H5M10.500 9.600v3.500M6.500 13h8M.6.6h4v4h-4zM2.600 4.600V13H5" /></svg>
      </button>
      <button aria-label="Volume" className="flex w-6 justify-center">
        <svg width="17" height="14" viewBox="0 0 17 14" fill="none" stroke="#fff"><path d="M.5 5v4h2.500l3.500 3.500v-11L3 5zM8.500 5q1.500 2 0 4M10.800 3q3 4 0 8M13.200 1.200q4.500 6 0 11.600" /></svg>
      </button>
      <button className="flex w-16 flex-col items-center text-xs leading-[18px]">
        <span>8:10 PM</span>
        <span>7/18/2025</span>
      </button>
      <button aria-label="Notifications" className="relative ml-3 flex h-10 w-[38px] items-center">
        <svg width="16" height="17" viewBox="0 0 16 17" fill="#fff" className="mb-1"><path d="M0 0h16v12H8l-4 4v-4H0z" /><path d="M2.500 3.500h11M2.500 6h11M2.500 8.500h8" stroke="#1d262b" /></svg>
        <span className="absolute top-[17px] left-[7px] flex size-[19px] items-center justify-center rounded-full border border-[#8a9296] bg-[#1d262b]/80 text-[11px] font-semibold">24</span>
      </button>
      <span className="mr-[3px] h-full w-px bg-[#6b7478]" />
    </div>
  </div>
);

export default function App() {
  return (
    <div className="flex h-screen flex-col overflow-hidden bg-[#efefef] font-['Open_Sans','Noto_Sans',sans-serif] text-[#242424]">
      <TitleBar />
      <TabStrip />
      <Ribbon />
      <FormulaBar />
      <Grid />
      <SheetBar />
      <StatusBar />
      <Taskbar />
    </div>
  );
}
